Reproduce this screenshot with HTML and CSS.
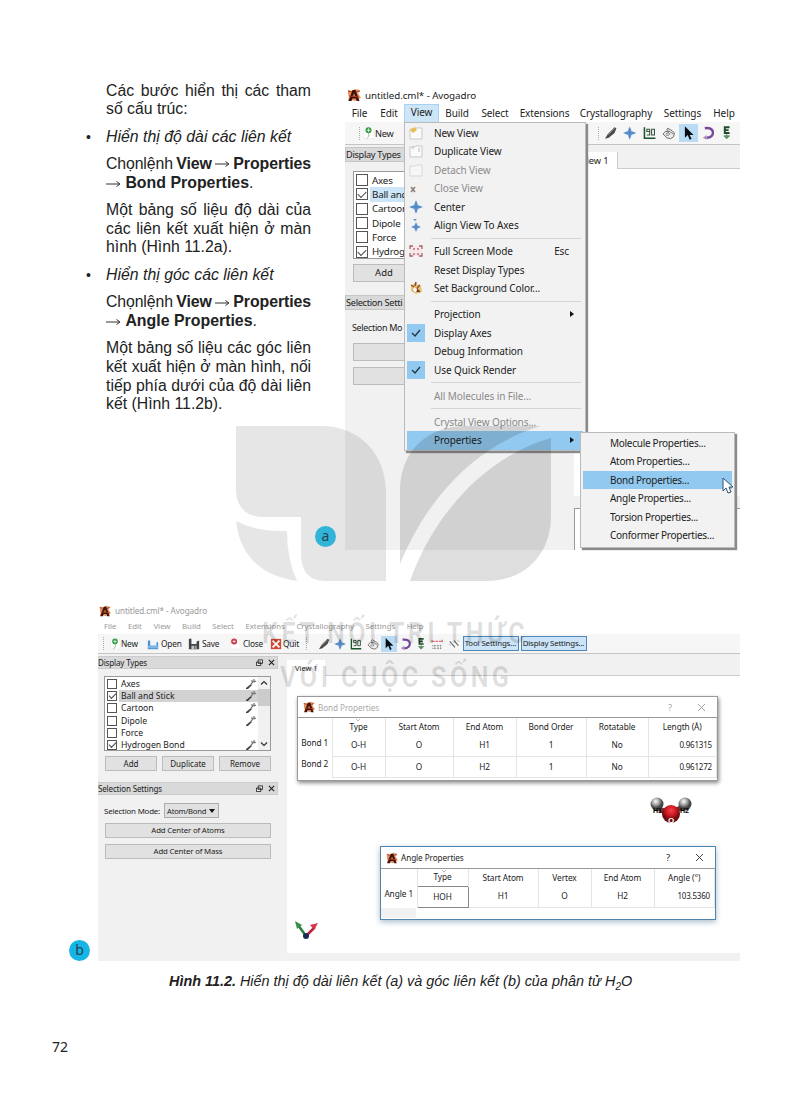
FILE: index.html
```html
<!DOCTYPE html>
<html lang="vi">
<head>
<meta charset="utf-8">
<title>Hình 11.2</title>
<link rel="stylesheet" href="styles.css">
</head>
<body>
<svg class="defs" width="0" height="0">
  <symbol id="logo" viewBox="0 0 14 14"><path d="M1 2l4 1 3-2 5 1-2 3 3 5-3 1-3 2-3-1-4 1 1-4-1-3z" fill="#e8945f"/><path d="M1.500 13l4-11h3l4 11H9.600l-.8-2.500H5.400L4.600 13zM6 8.500h2.200L7 5z" fill="#3a130c"/><path d="M1 3l4 1M9 4l4-1M2 8l10 1" stroke="#b53a20"/></symbol>
  <symbol id="new" viewBox="0 0 14 14"><path d="M2 1h8l3 3v9H2z" fill="#fff" stroke="#eee"/><circle cx="7" cy="4" r="3.300" fill="#359b48"/><path d="M7 2v4M5 4h4" stroke="#d6f1d8"/><path d="M7 7c1 3 0 4-2 6" stroke="#7cc488" fill="none"/></symbol>
  <symbol id="closefile" viewBox="0 0 14 14"><path d="M2 1h8l3 3v9H2z" fill="#fff" stroke="#eee"/><circle cx="6" cy="4" r="3.500" fill="#c9364a"/><path d="M6 2v4M4 4h4" stroke="#f8d6da"/></symbol>
  <symbol id="open" viewBox="0 0 14 14"><path d="M1 3h3v6h7V5h2v8H1z" fill="#4d91d0"/><path d="M1 9h12v3H1z" fill="#7eb5e5"/><path d="M4 3h6v5H4z" fill="#eef4fa"/></symbol>
  <symbol id="save" viewBox="0 0 14 14"><path d="M1 1h3v6h6V4l3-1v10H1z" fill="#3f454b"/><path d="M4 9h6v4H4z" fill="#bfc4c8"/><path d="M8 9v4" stroke="#333"/></symbol>
  <symbol id="quit" viewBox="0 0 14 14"><path d="M1 1h12v12H1z" fill="#cf4936"/><path d="M3 3l8 8M11 3l-8 8" stroke="#fff" stroke-width="2"/></symbol>
  <symbol id="pencil" viewBox="0 0 14 14"><path d="M1 13l3-5 7-7 2 1-2 5-6 5z" fill="#4b4b4b"/><path d="M4 9l7-7" stroke="#999"/></symbol>
  <symbol id="star" viewBox="0 0 14 14"><path d="M7 0l2 5 5 2-5 2-2 5-2-5-5-2 5-2z" fill="#6b9fd6"/><path d="M7 2v10M2 7h10" stroke="#4a7cb8"/></symbol>
  <symbol id="ninety" viewBox="0 0 14 14"><path d="M1.500 1v11.500H13" fill="none" stroke="#17552c" stroke-width="1.600"/><path d="M7 7V3H4v2.500h3M4 9h3V7M9 3h3v6H9z" fill="none" stroke="#32543b" stroke-width="1.100"/></symbol>
  <symbol id="hand" viewBox="0 0 14 14"><path d="M3 6L1 8l4 4 4 1 3-2 1-4-2-2-5-3-1 1 2 3-3-1z" fill="#eee" stroke="#666"/><path d="M4 8c1-2 4-1 4 0s-2 2-4 1M7 5l5 3" fill="none" stroke="#777"/></symbol>
  <symbol id="arrow" viewBox="0 0 14 14"><path d="M3 0v12l3-3 2 5 2-1-2-4h4z" fill="#080b14"/></symbol>
  <symbol id="undo" viewBox="0 0 14 14"><path d="M4 2c11-2 11 10 2 10" fill="none" stroke="#744a9e" stroke-width="2.600"/><path d="M6 9v5l-4-2z" fill="#a98ac2"/></symbol>
  <symbol id="energy" viewBox="0 0 14 14"><path d="M10 1H5v6h5M5 4h4" fill="none" stroke="#214b2d" stroke-width="2"/><path d="M7 8v5M4 10h6l-3 3z" fill="#5a9167" stroke="#5a9167"/></symbol>
  <symbol id="measure" viewBox="0 0 14 14"><path d="M1 4h12M1 2v4M13 2v4M5 4h4" stroke="#cf6b6f" stroke-width="1.400" stroke-dasharray="3 1"/><path d="M1 9h12M1 12h12M4 8v5M8 8v5M11 8v5" stroke="#8b8b8b" stroke-dasharray="2 1"/></symbol>
  <symbol id="bonds" viewBox="0 0 14 14"><path d="M2 4l6 7M7 3l5 6" stroke="#666" stroke-width="1.300"/><path d="M1 7l2 2M11 3l2 1" stroke="#aaa"/></symbol>
  <symbol id="wrench" viewBox="0 0 12 12"><path d="M1 10l5-4 1 1-4 4H1z" fill="#444"/><path d="M6 6l3-3V1M9 4l2-1M7 4V2" stroke="#777" stroke-width="1.200" fill="none"/></symbol>
  <symbol id="page" viewBox="0 0 14 14"><path d="M1 3h5l1-1h6v11H1z" fill="#fafafa" stroke="#c9c9c9"/></symbol>
  <symbol id="float" viewBox="0 0 8 8"><path d="M2.500 1h5v4h-5zM.500 3.500h5v4h-5z" fill="#eee" stroke="#222"/></symbol>
  <symbol id="ex" viewBox="0 0 8 8"><path d="M1 1l6 6M7 1L1 7" stroke="#222" stroke-width="1.300"/></symbol>
  <symbol id="thin-ex" viewBox="0 0 9 9"><path d="M1 1l7 7M8 1L1 8" stroke="#333" stroke-width=".9"/></symbol>
</svg>
<main class="page">
  <div class="top">
    <section class="copy">
      <p><span class="fill">Các bước hiển thị các tham</span><span>số cấu trúc:</span></p>
      <p class="bullet"><i>Hiển thị độ dài các liên kết</i></p>
      <p><span class="fill tight"><span>Chọnlệnh</span><b>View</b><svg class="ar" viewBox="0 0 15 8"><path d="M0 4h13M10.500 1.500L14 4l-3.500 2.500"/></svg><b>Properties</b></span><span><svg class="ar" viewBox="0 0 15 8"><path d="M0 4h13M10.500 1.500L14 4l-3.500 2.500"/></svg> <b>Bond Properties</b>.</span></p>
      <p><span class="fill">Một bảng số liệu độ dài của</span><span class="fill">các liên kết xuất hiện ở màn</span><span>hình (Hình 11.2a).</span></p>
      <p class="bullet"><i>Hiển thị góc các liên kết</i></p>
      <p><span class="fill tight"><span>Chọnlệnh</span><b>View</b><svg class="ar" viewBox="0 0 15 8"><path d="M0 4h13M10.500 1.500L14 4l-3.500 2.500"/></svg><b>Properties</b></span><span><svg class="ar" viewBox="0 0 15 8"><path d="M0 4h13M10.500 1.500L14 4l-3.500 2.500"/></svg> <b>Angle Properties</b>.</span></p>
      <p><span class="fill">Một bảng số liệu các góc liên</span><span class="fill snug">kết xuất hiện ở màn hình, nối</span><span class="fill">tiếp phía dưới của độ dài liên</span><span>kết (Hình 11.2b).</span></p>
    </section>

    <section class="win win-a">
      <div class="title"><svg><use href="#logo"/></svg><span>untitled.cml* - Avogadro</span></div>
      <nav class="menubar"><span>File</span><span>Edit</span><span class="on">View</span><span>Build</span><span>Select</span><span>Extensions</span><span>Crystallography</span><span>Settings</span><span>Help</span></nav>
      <div class="toolbar"><i class="grip"></i><svg><use href="#new"/></svg><span class="t-new">New</span><span class="tools"><i class="grip"></i><svg><use href="#pencil"/></svg><svg><use href="#star"/></svg><svg><use href="#ninety"/></svg><svg><use href="#hand"/></svg><svg class="sel"><use href="#arrow"/></svg><svg><use href="#undo"/></svg><svg><use href="#energy"/></svg></span></div>
      <div class="work">
        <aside>
          <h4>Display Types</h4>
          <ul class="list"><li><i class="cb"></i>Axes</li><li class="hi"><i class="cb ck"></i>Ball and</li><li><i class="cb"></i>Cartoon</li><li><i class="cb"></i>Dipole</li><li><i class="cb"></i>Force</li><li><i class="cb ck"></i>Hydrog</li></ul>
          <div class="btn add">Add</div>
          <h4 class="second">Selection Setti</h4>
          <div class="mode">Selection Mo</div>
          <div class="btn wide"></div><div class="btn wide"></div>
        </aside>
        <div class="view"><div class="tab"><span>View 1</span></div><div class="canvas"></div><div class="gap"></div><div class="msgs"></div></div>
      </div>
      <div class="menu main-menu">
        <div class="mi"><svg><use href="#page"/><path d="M1 4l5-3 2 3-4 3z" fill="#ebbd51"/></svg>New View</div>
        <div class="mi"><svg><use href="#page"/><path d="M4 2v3M10 4v4" stroke="#bbb"/></svg>Duplicate View</div>
        <div class="mi off"><svg class="dim"><use href="#page"/></svg>Detach View</div>
        <div class="mi off"><svg><path d="M5 2h8v10H6" fill="#f6f0ee"/><path d="M2 6l4 5M6 6l-4 5" stroke="#8a8080" stroke-width="1.600"/></svg>Close View</div>
        <div class="mi"><svg><use href="#star"/></svg>Center</div>
        <div class="mi"><svg><path d="M4 1l2 2 2-2M7 4l1.500 3.500L12 9l-3.500 1.500L7 14l-1.500-3.500L2 9l3.500-1.500z" fill="#5b8fce"/></svg>Align View To Axes</div>
        <hr>
        <div class="mi"><svg><path d="M1 2h12v10H1z" fill="#f9e7e7"/><path d="M4 2H1v3M10 2h3v3M1 9v3h3M13 9v3h-3M5 4v2M9 4v2M5 9v2M9 9v2" fill="none" stroke="#a8646c" stroke-width="1.300"/></svg>Full Screen Mode<span class="key">Esc</span></div>
        <div class="mi">Reset Display Types</div>
        <div class="mi"><svg><path d="M2 5l4-3 6 3 1 6-6 2-5-3z" fill="#ecc273"/><path d="M2 4l3 2M7 1l-1 4M11 4l-3 3M4 10l4-2 3 3" stroke="#8d4c38" stroke-width="1.500"/><circle cx="6" cy="9" r="2" fill="#fff"/></svg>Set Background Color...</div>
        <hr>
        <div class="mi">Projection<i class="tri"></i></div>
        <div class="mi"><svg class="check" viewBox="0 0 18 18"><path d="M5 9l3 3 5-6"/></svg>Display Axes</div>
        <div class="mi">Debug Information</div>
        <div class="mi"><svg class="check" viewBox="0 0 18 18"><path d="M5 9l3 3 5-6"/></svg>Use Quick Render</div>
        <hr>
        <div class="mi off">All Molecules in File...</div>
        <hr>
        <div class="mi off">Crystal View Options...</div>
        <div class="mi active">Properties<i class="tri"></i></div>
      </div>
      <div class="menu sub-menu">
        <div class="mi">Molecule Properties...</div><div class="mi">Atom Properties...</div><div class="mi active">Bond Properties...</div><div class="mi">Angle Properties...</div><div class="mi">Torsion Properties...</div><div class="mi">Conformer Properties...</div>
        <svg class="pointer" viewBox="0 0 12 17"><path d="M1 1v13l3-3 2 5 3-1-2-5h4z" fill="#fff" stroke="#33506b"/></svg>
      </div>
    </section>
  </div>

  <section class="win win-b">
    <div class="title"><svg><use href="#logo"/></svg><span>untitled.cml* - Avogadro</span></div>
    <nav class="menubar"><span>File</span><span>Edit</span><span>View</span><span>Build</span><span>Select</span><span>Extensions</span><span>Crystallography</span><span>Settings</span><span>Help</span></nav>
    <div class="toolbar"><i class="grip"></i><span class="file first"><svg><use href="#new"/></svg>New</span><span class="file"><svg><use href="#open"/></svg>Open</span><span class="file"><svg><use href="#save"/></svg>Save</span><span class="file"><svg><use href="#closefile"/></svg>Close</span><span class="file last"><svg><use href="#quit"/></svg>Quit</span><span class="tools"><i class="grip"></i><svg><use href="#pencil"/></svg><svg><use href="#star"/></svg><svg><use href="#ninety"/></svg><svg><use href="#hand"/></svg><svg class="sel"><use href="#arrow"/></svg><svg><use href="#undo"/></svg><svg><use href="#energy"/></svg><svg><use href="#measure"/></svg><svg><use href="#bonds"/></svg></span><span class="setting">Tool Settings...</span><span class="setting">Display Settings...</span></div>
    <div class="work">
      <aside>
        <h4>Display Types<svg><use href="#float"/></svg><svg><use href="#ex"/></svg></h4>
        <div class="list-box">
          <ul class="list"><li><i class="cb"></i>Axes<svg><use href="#wrench"/></svg></li><li class="hi"><i class="cb ck"></i>Ball and Stick<svg><use href="#wrench"/></svg></li><li><i class="cb"></i>Cartoon<svg><use href="#wrench"/></svg></li><li><i class="cb"></i>Dipole<svg><use href="#wrench"/></svg></li><li><i class="cb"></i>Force</li><li><i class="cb ck"></i>Hydrogen Bond<svg><use href="#wrench"/></svg></li></ul>
          <div class="scroll"><svg viewBox="0 0 8 8"><path d="M2 5l2-2 2 2"/></svg><i></i><svg viewBox="0 0 8 8"><path d="M2 3l2 2 2-2"/></svg></div>
        </div>
        <div class="btns"><div class="btn">Add</div><div class="btn">Duplicate</div><div class="btn">Remove</div></div>
        <h4 class="second">Selection Settings<svg><use href="#float"/></svg><svg><use href="#ex"/></svg></h4>
        <div class="mode">Selection Mode:<span class="combo">Atom/Bond<i></i></span></div>
        <div class="btn wide">Add Center of Atoms</div><div class="btn wide">Add Center of Mass</div>
      </aside>
      <div class="view"><div class="tab"><span>View 1</span></div><div class="canvas"></div></div>
    </div>
    <div class="dialog bond">
      <header><svg><use href="#logo"/></svg>Bond Properties<span class="q">?</span><svg class="x"><use href="#thin-ex"/></svg></header>
      <table><colgroup><col><col><col><col><col><col><col></colgroup>
        <tr><td></td><th>Type</th><th>Start Atom</th><th>End Atom</th><th>Bond Order</th><th>Rotatable</th><th>Length (Å)</th></tr>
        <tr><th>Bond 1</th><td>O-H</td><td>O</td><td>H1</td><td>1</td><td>No</td><td class="num">0.961315</td></tr>
        <tr><th>Bond 2</th><td>O-H</td><td>O</td><td>H2</td><td>1</td><td>No</td><td class="num">0.961272</td></tr>
      </table>
      <svg class="sort" viewBox="0 0 6 4"><path d="M1 1l2 2 2-2"/></svg>
    </div>
    <svg class="molecule" viewBox="0 0 44 32"><defs><radialGradient id="gh" cx=".4" cy=".3"><stop offset="0" stop-color="#fff"/><stop offset=".6" stop-color="#999"/><stop offset="1" stop-color="#444"/></radialGradient><radialGradient id="go" cx=".5" cy=".3"><stop offset="0" stop-color="#f3434a"/><stop offset=".6" stop-color="#ca1620"/><stop offset="1" stop-color="#6b0d10"/></radialGradient></defs><path d="M8 12l12 5 14-6" fill="none" stroke="#6e3232" stroke-width="5"/><circle cx="8" cy="8" r="6.500" fill="url(#gh)"/><circle cx="36" cy="8" r="6.500" fill="url(#gh)"/><circle cx="22" cy="18" r="9" fill="url(#go)"/><text x="4" y="17">H1</text><text x="31" y="17">H2</text><text x="19" y="27" class="ox">O</text></svg>
    <div class="dialog angle">
      <header><svg><use href="#logo"/></svg>Angle Properties<span class="q">?</span><svg class="x"><use href="#thin-ex"/></svg></header>
      <table><colgroup><col><col><col><col><col><col></colgroup>
        <tr><td></td><th>Type</th><th>Start Atom</th><th>Vertex</th><th>End Atom</th><th>Angle (°)</th></tr>
        <tr><th>Angle 1</th><td class="cell">HOH</td><td>H1</td><td>O</td><td>H2</td><td class="num">103.5360</td></tr>
      </table>
      <svg class="sort" viewBox="0 0 6 4"><path d="M1 1l2 2 2-2"/></svg>
      <div class="corner"></div>
    </div>
    <svg class="axes" viewBox="0 0 26 22"><path d="M12 17L4 6" stroke="#23803a" stroke-width="2.500"/><path d="M1 2l7 4-5 4z" fill="#388e48"/><path d="M12 17l9-9" stroke="#b52435" stroke-width="2.500"/><path d="M24 4l-8 2 4 5z" fill="#d63648"/><circle cx="12" cy="17" r="3" fill="#182b58"/></svg>
  </section>
  <p class="caption"><b>Hình 11.2.</b> Hiển thị độ dài liên kết (a) và góc liên kết (b) của phân tử H<sub>2</sub>O</p>
  <p class="folio">72</p>

  <svg class="mark" viewBox="0 0 320 160"><g><path d="M2 2h86c37 0 64 28 64 66v89H91c-17 0-24-11-24-28V93H28C12 93 2 82 2 66z" opacity=".098"/><path d="M2 97q21 11 51 10q0 29 10 50Q8 149 2 97z" opacity=".098"/><path d="M166 140V66c0-38 27-64 65-64h76C239 22 192 77 166 140z" opacity=".13"/><path d="M176 157C201 86 256 31 317 14v78c0 38-26 65-64 65z" opacity=".13"/></g></svg>
  <div class="slogan s1">KẾT NỐI TRI THỨC</div>
  <div class="slogan s2">VỚI CUỘC SỐNG</div>
  <span class="badge badge-a">a</span>
  <span class="badge badge-b">b</span>
</main>
</body>
</html>
```
FILE: styles.css
```css
* { box-sizing: border-box; }
body { margin: 0; background: #fff; color: #222; font-family: "Liberation Sans", Arial, sans-serif; }
p, h4, ul { margin: 0; padding: 0; font-weight: normal; list-style: none; }
.defs { display: block; height: 0; }
.page { position: relative; width: 787px; height: 1105px; overflow: hidden; padding: 80px 47px 0 52px; }
.top { display: flex; height: 470px; }

/* body copy */
.copy { width: 205px; margin-left: 54px; padding-top: 1.500px; font-size: 15.800px; line-height: 18.700px; }
.copy p { margin-bottom: 8.700px; white-space: nowrap; }
.copy p > span { display: block; }
.copy .fill { white-space: normal; text-align-last: justify; }
.copy .snug { letter-spacing: -.1px; white-space: nowrap; }
.copy p > .tight { display: flex; align-items: center; justify-content: space-between; letter-spacing: -.1px; }
.copy b { font-size: 15.900px; }
.ar { width: 15px; height: 8px; fill: none; stroke: #333; stroke-width: 1; }
.bullet { display: flex; }
.bullet::before { content: "•"; width: 20px; margin-left: -20px; font-size: 14px; }
.bullet i { letter-spacing: .03px; }

/* application windows */
.win { position: relative; font-family: "Noto Sans", sans-serif; font-size: 10px; white-space: nowrap; }
.title, .menubar, .toolbar, .tools, .file { display: flex; align-items: center; }
.win h4 { background: #d9d9d9; }
.work { display: flex; background: #f1f1f1; }
.grip { width: 3px; height: 13px; border-left: 1px dotted #aaa; }
.sel { background: #b9dcf4; }
.cb { display: block; flex: none; border: 1px solid #555; background: #fff; position: relative; }
.ck::after { content: ""; position: absolute; left: 1px; top: 1px; width: 6px; height: 3px; border: solid #444; border-width: 0 0 1px 1px; transform: rotate(-45deg); }
.list { background: #fff; border: 1px solid #999; }
.list li { display: flex; align-items: center; }
.btn { background: #e1e1e1; border: 1px solid #bcbcbc; text-align: center; }
.view { flex: 1; display: flex; flex-direction: column; }
.canvas { background: #fff; flex: 1; }

.win-a { width: 395px; height: 464px; margin: 6px 0 0 34px; }
.win-a .title { height: 18px; gap: 4px; padding-left: 2px; font-size: 9.800px; letter-spacing: -.08px; }
.title svg { width: 14px; height: 14px; }
.win-a .menubar { height: 18px; letter-spacing: -.1px; }
.win-a .menubar span { flex: none; text-align: center; line-height: 17px; }
.win-a .menubar span:nth-child(1) { width: 29px; }
.win-a .menubar span:nth-child(2) { width: 30px; }
.win-a .menubar span:nth-child(3) { width: 35px; background: #cce6f8; border: solid #a8d3ef; border-width: 1px 1px 0; line-height: 15px; height: 18px; }
.win-a .menubar span:nth-child(4) { width: 36px; }
.win-a .menubar span:nth-child(5) { width: 40px; }
.win-a .menubar span:nth-child(6) { width: 59px; }
.win-a .menubar span:nth-child(7) { width: 84px; }
.win-a .menubar span:nth-child(8) { width: 49px; }
.win-a .menubar span:nth-child(9) { width: 34px; }
.win-a .toolbar { height: 23px; background: #f6f6f6; border-bottom: 1px solid #c4c4c4; padding-left: 14px; }
.win-a .toolbar > svg { width: 13px; height: 14px; }
.win-a .toolbar .t-new { width: 223px; margin-left: 0; font-size: 9.200px; letter-spacing: -.2px; }
.win-a .tools svg { width: 19.400px; height: 18px; padding: 2px 3px; }
.win-a .work { height: 405px; }
.win-a aside { width: 229px; }
.win-a h4 { margin-top: 2px; height: 15px; line-height: 13px; border: 1px solid #c6c6c6; width: 70px; font-size: 9.200px; letter-spacing: -.3px; }
.win-a .list { margin: 9px 0 0 8px; width: 62px; height: 88px; padding-top: 1px; font-size: 9.800px; letter-spacing: -.2px; }
.win-a .list li { height: 14.300px; padding-left: 2px; }
.win-a .cb { width: 12px; height: 12px; margin-right: 4px; }
.win-a .ck::after { left: 1px; top: 2px; width: 7px; height: 4px; }
.win-a .hi { background: linear-gradient(90deg, #fff 16px, #cce5f8 16px); }
.win-a .add { margin: 5px 0 0 8px; width: 62px; height: 18px; line-height: 15px; font-size: 9.500px; }
.win-a .second { margin-top: 13px; }
.win-a .mode { margin: 13px 0 10px 7px; width: 56px; height: 10px; line-height: 9px; font-size: 9px; letter-spacing: -.35px; }
.win-a .wide { margin: 0 0 6px 8px; width: 62px; height: 18px; }
.win-a .tab { height: 24px; padding-top: 7px; border-bottom: 1px solid #ccc; }
.win-a .tab span { display: block; width: 44px; height: 17px; background: #fff; border-right: 1px solid #ccc; padding-left: 7px; line-height: 18px; font-size: 9.300px; letter-spacing: -.1px; }
.win-a .gap { height: 12px; }
.win-a .msgs { height: 42px; background: #fff; border: solid #999; border-width: 1px 0 0 1px; }

/* menus float above the window */
.menu { position: absolute; background: #f2f2f2; border: 1px solid #bbb; box-shadow: 2px 2px 1px #8a8a8a; }
.main-menu { left: 59px; top: 36px; width: 182px; height: 329px; padding: .6px 2px; letter-spacing: -.1px; }
.sub-menu { left: 235px; top: 346px; width: 155px; height: 116px; padding: .5px 2px; letter-spacing: -.28px; }
.mi { display: flex; align-items: center; position: relative; height: 18.500px; padding-left: 27px; font-size: 10px; }
.main-menu .mi svg { width: 14px; height: 14px; margin: 0 11px 0 -25px; }
.main-menu .mi .check { width: 18px; height: 18px; margin: 0 9px 0 -27px; background: #91c9f1; fill: none; stroke: #234; stroke-width: 1.300; }
.off { color: #8a8a8a; }
.dim { opacity: .6; }
.active { background: #91c9f1; }
.key { margin-left: auto; padding-right: 14px; }
.tri { margin-left: auto; margin-right: 9px; border: solid transparent; border-width: 3px 0 3px 4px; border-left-color: #111; }
.menu hr { height: 1px; border: 0; background: #d5d5d5; margin: 3px 2px 3.500px 24px; }
.pointer { position: absolute; left: 141px; top: 44px; width: 12px; height: 17px; }

.win-b { width: 642px; height: 360px; margin: 51px 0 0 46px; font-size: 8.600px; }
.win-b .title { height: 19px; gap: 4px; padding-left: 1px; color: #999; font-size: 8.200px; letter-spacing: -.1px; }
.win-b .title svg { width: 12px; height: 12px; }
.win-b .menubar { height: 14px; line-height: 13px; align-items: flex-start; color: #999; padding-left: 6px; font-size: 7.800px; }
.win-b .menubar span { margin-right: 11.500px; }
.win-b .toolbar { height: 20px; background: #f6f6f6; border-bottom: 1px solid #c4c4c4; padding-left: 5px; font-size: 8.300px; }
.win-b .grip { margin-right: 3px; }
.file { width: 41px; gap: 2px; letter-spacing: -.2px; }
.file.first { width: 38px; gap: 0; }
.file.last { width: 36px; gap: 1px; }
.file svg { width: 12px; height: 12px; }
.win-b .tools svg { width: 16.200px; height: 16px; padding: 2px; }
.win-b .tools .grip { margin-right: 7px; }
.setting { height: 15px; line-height: 13px; background: #cce4f7; border: 1px solid #4f86b8; padding: 0 1px; margin-right: 2px; width: 56px; font-size: 7.900px; letter-spacing: -.15px; }
.setting:last-child { width: 66px; font-size: 7.900px; letter-spacing: -.2px; }
.tools + .setting { margin-left: 1px; }
.win-b .work { height: 307px; }
.win-b aside { width: 189px; padding-top: 2px; }
.win-b h4 { display: flex; align-items: center; width: 180px; height: 13px; line-height: 12px; border: 1px solid #ccc; border-left: 0; gap: 5px; padding-right: 2px; font-size: 8px; letter-spacing: -.15px; }
.win-b h4 svg { width: 7px; height: 7px; }
.win-b h4 svg:first-of-type { margin-left: auto; }
.list-box { display: flex; width: 167px; height: 75px; margin: 7px 0 0 6px; border: 1px solid #999; background: #fff; }
.win-b .list { flex: 1; border: 0; padding-top: 1px; }
.win-b .list li { height: 12.200px; padding-left: 2px; }
.win-b .cb { width: 10px; height: 10px; margin-right: 4px; }
.win-b .list svg { width: 12px; height: 12px; margin-left: auto; margin-right: 1px; }
.win-b .hi { background: linear-gradient(90deg, #fff 14px, #d2d2d2 14px); }
.scroll { width: 12px; background: #f1f1f1; display: flex; flex-direction: column; justify-content: space-between; }
.scroll svg { width: 12px; height: 12px; fill: none; stroke: #333; stroke-width: .8; }
.scroll i { height: 17px; background: #ccc; margin-bottom: 32px; }
.btns { display: flex; gap: 5px; padding: 5px 0 0 7px; }
.btns .btn { width: 52px; height: 15px; line-height: 13px; font-size: 8px; }
.win-b .second { margin-top: 11px; }
.win-b .mode { display: flex; align-items: center; gap: 4px; margin: 8px 0 5px 6px; height: 15px; font-size: 7.900px; letter-spacing: -.2px; }
.combo { display: flex; align-items: center; width: 55px; height: 15px; padding: 0 3px 0 2px; border: 1px solid #adadad; background: #e1e1e1; justify-content: space-between; font-size: 7.600px; }
.combo i { border: solid transparent; border-width: 4px 3px 0; border-top-color: #111; }
.win-b .wide { width: 166px; height: 15px; line-height: 13px; margin: 0 0 6px 7px; font-size: 7.800px; letter-spacing: -.15px; }
.win-b .tab { height: 22px; padding-top: 6px; border-bottom: 1px solid #ccc; }
.win-b .tab span { display: block; width: 38px; height: 16px; line-height: 17px; padding-left: 8px; background: #fff; font-size: 7.500px; }
.win-b .view { padding-bottom: 8px; }

/* dialogs lie over the canvas */
.dialog { position: absolute; background: #fff; border: 1px solid #999; box-shadow: 1px 2px 4px #888; font-size: 8.300px; letter-spacing: -.08px; }
.dialog header { display: flex; align-items: center; gap: 3px; height: 21px; padding: 0 11px 0 5px; border-bottom: 1px solid #999; font-size: 8.200px; }
.dialog header svg { width: 12px; height: 12px; }
.dialog header .q { margin-left: auto; margin-right: 22px; font-size: 9.500px; }
.dialog header .x { width: 9px; height: 9px; }
.dialog table { border-collapse: collapse; table-layout: fixed; width: 100%; }
.dialog td, .dialog th { padding: 0; font-weight: normal; text-align: center; border: 1px solid #e4e4e4; border-top: 0; height: 21px; line-height: 12px; }
.dialog tr:first-child > * { height: 17px; border-bottom: 0; }
.dialog tr > :first-child { border-left: 0; border-bottom: 0; }
.dialog tr > th:first-child { vertical-align: top; padding-top: 2px; }
.dialog td.num { text-align: right; padding-right: 4px; font-size: 8px; letter-spacing: -.2px; }
.sort { position: absolute; width: 6px; height: 4px; fill: none; stroke: #bbb; }
.bond { left: 199px; top: 95px; width: 421px; height: 85px; }
.bond .sort { left: 57px; top: 21px; }
.bond header { color: #aaa; }
.bond header .x { opacity: .5; }
.bond col:nth-child(1) { width: 34px; }
.bond col:nth-child(2) { width: 53px; }
.bond col:nth-child(3) { width: 68px; }
.bond col:nth-child(4) { width: 63px; }
.bond col:nth-child(5) { width: 70px; }
.bond col:nth-child(6) { width: 62px; }
.angle { left: 282px; top: 245px; width: 336px; height: 74px; border-color: #4b85b0; box-shadow: 0 2px 6px #a9bdcc; }
.angle header { height: 22px; }
.angle .sort { left: 60px; top: 22px; }
.corner { width: 35px; height: 10px; background: #f1f1f1; }
.angle col:nth-child(1) { width: 36px; }
.angle col:nth-child(2) { width: 51px; }
.angle col:nth-child(3) { width: 70px; }
.angle col:nth-child(4) { width: 53px; }
.angle col:nth-child(5) { width: 63px; }
.angle td.cell { border: 1px solid #888; }
.molecule { position: absolute; left: 551px; top: 195px; width: 44px; height: 32px; font: bold 7px "Liberation Sans", sans-serif; }
.molecule .ox { fill: #fff; font-size: 8px; }
.axes { position: absolute; left: 196px; top: 318px; width: 26px; height: 22px; }

.caption { margin: 10px 0 0 117px; font-size: 14.400px; font-style: italic; line-height: 20px; white-space: nowrap; }
.caption sub { font-size: 10px; line-height: 0; }
.folio { margin-top: 46px; font: 14px/20px "Noto Sans", sans-serif; }

/* watermark and figure labels */
.mark { position: absolute; left: 234px; top: 424px; width: 320px; height: 160px; }
.slogan { position: absolute; color: rgba(0, 0, 0, .13); font: bold 30px/36px Roboto, sans-serif; letter-spacing: 4px; white-space: nowrap; transform-origin: 0 0; transform: scaleX(.84); }
.s1 { left: 262px; top: 615px; }
.s2 { left: 280px; top: 659px; }
.badge { position: absolute; width: 21px; height: 21px; border-radius: 50%; background: #32b4d8; font: 14px/20px "Noto Sans", sans-serif; text-align: center; color: #245; }
.badge-a { left: 315px; top: 526px; }
.badge-b { left: 69px; top: 940px; background: #17b5e6; }
```
